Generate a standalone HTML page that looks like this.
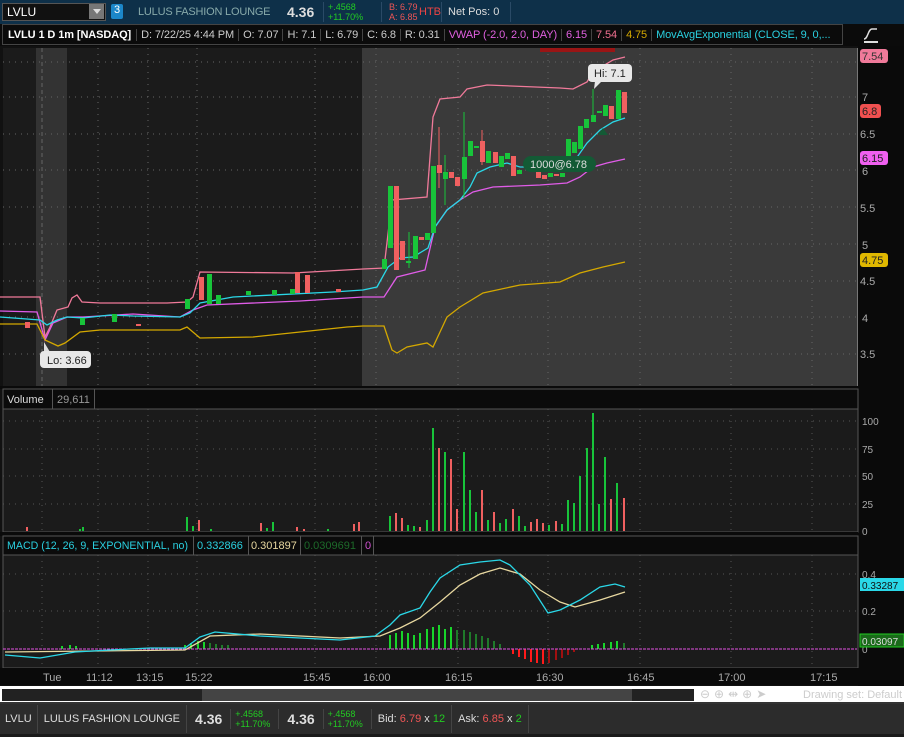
<!DOCTYPE html>
<html><head><meta charset="utf-8"><style>
*{margin:0;padding:0;box-sizing:border-box}
body{width:904px;height:737px;background:#111;font-family:"Liberation Sans",sans-serif;overflow:hidden;position:relative}
.a{position:absolute;white-space:nowrap}
</style></head><body>
<!-- top bar -->
<div class="a" style="left:0;top:0;width:904px;height:24px;background:#0e3049"></div>
<div class="a" style="left:2px;top:3px;width:104px;height:18px;background:#111;border:1px solid #555"></div>
<div class="a" style="left:7px;top:5px;color:#fff;font-size:12px">LVLU</div>
<div class="a" style="left:89px;top:4px;width:15px;height:15px;background:#777"></div>
<div class="a" style="left:93px;top:9px;width:0;height:0;border-left:4px solid transparent;border-right:4px solid transparent;border-top:5px solid #ddd"></div>
<div class="a" style="left:111px;top:4px;width:12px;height:15px;background:#1c87c9;color:#fff;font-size:11px;text-align:center;border-radius:2px">3</div>
<div class="a" style="left:138px;top:6px;color:#8aa;font-size:11px;letter-spacing:-0.2px">LULUS FASHION LOUNGE</div>
<div class="a" style="left:287px;top:4px;color:#ddd;font-size:14px;font-weight:bold">4.36</div>
<div class="a" style="left:328px;top:2px;color:#2c2;font-size:9px;line-height:10px">+.4568<br>+11.70%</div>
<div class="a" style="left:389px;top:2px;color:#e55;font-size:9px;line-height:10px">B: 6.79<br>A: 6.85</div>
<div class="a" style="left:419px;top:6px;color:#e44;font-size:11px">HTB</div>
<div class="a" style="left:448px;top:6px;color:#ddd;font-size:11px">Net Pos: 0</div>
<div class="a" style="left:323px;top:2px;width:1px;height:20px;background:#2a4a66"></div>
<div class="a" style="left:381px;top:2px;width:1px;height:20px;background:#2a4a66"></div>
<div class="a" style="left:441px;top:2px;width:1px;height:20px;background:#2a4a66"></div>
<div class="a" style="left:510px;top:2px;width:1px;height:20px;background:#2a4a66"></div>
<!-- chart header -->
<div class="a" style="left:0;top:24px;width:904px;height:22px;background:#0b0b0b"></div>
<div class="a" style="left:2px;top:24px;width:841px;height:21px;border:1px solid #444;font-size:11px;color:#ccc;display:flex;align-items:center;letter-spacing:-0.1px">
<span style="padding:0 5px;color:#fff;font-weight:bold;border-right:1px solid #444">LVLU 1 D 1m [NASDAQ]</span>
<span style="padding:0 4px;border-right:1px solid #444">D: 7/22/25 4:44 PM</span>
<span style="padding:0 4px;border-right:1px solid #444">O: 7.07</span>
<span style="padding:0 4px;border-right:1px solid #444">H: 7.1</span>
<span style="padding:0 4px;border-right:1px solid #444">L: 6.79</span>
<span style="padding:0 4px;border-right:1px solid #444">C: 6.8</span>
<span style="padding:0 4px;border-right:1px solid #444">R: 0.31</span>
<span style="padding:0 4px;color:#e060e0;border-right:1px solid #444">VWAP (-2.0, 2.0, DAY)</span>
<span style="padding:0 4px;color:#e060e0;border-right:1px solid #444">6.15</span>
<span style="padding:0 4px;color:#f07090;border-right:1px solid #444">7.54</span>
<span style="padding:0 4px;color:#d4a800;border-right:1px solid #444">4.75</span>
<span style="padding:0 4px;color:#2ad0e0">MovAvgExponential (CLOSE, 9, 0,...</span>
</div>
<svg class="a" style="left:862px;top:26px" width="18" height="18"><path d="M2 13 C6 13 6 3 10 3 L15 3" stroke="#ddd" fill="none" stroke-width="1.5"/><line x1="2" y1="16" x2="16" y2="16" stroke="#ddd" stroke-width="2"/></svg>

<svg class="a" style="left:0;top:46px" width="904" height="640" viewBox="0 46 904 640">
<rect x="3" y="48" width="855" height="338" fill="#1b1b1b"/>
<rect x="362" y="48" width="496" height="338" fill="#3a3a3a"/>
<rect x="36" y="48" width="31" height="338" fill="#333"/>
<line x1="42" y1="48" x2="42" y2="386" stroke="#666" stroke-dasharray="4,3"/>
<g stroke="#666" stroke-dasharray="1,5">
<line x1="3" y1="62" x2="857" y2="62"/><line x1="3" y1="97" x2="857" y2="97"/><line x1="3" y1="134" x2="857" y2="134"/><line x1="3" y1="170" x2="857" y2="170"/><line x1="3" y1="207" x2="857" y2="207"/><line x1="3" y1="244" x2="857" y2="244"/><line x1="3" y1="281" x2="857" y2="281"/><line x1="3" y1="317" x2="857" y2="317"/><line x1="3" y1="354" x2="857" y2="354"/>
<line x1="98" y1="48" x2="98" y2="386"/><line x1="148" y1="48" x2="148" y2="386"/><line x1="197" y1="48" x2="197" y2="386"/><line x1="315" y1="48" x2="315" y2="386"/><line x1="376" y1="48" x2="376" y2="386"/><line x1="458" y1="48" x2="458" y2="386"/><line x1="548" y1="48" x2="548" y2="386"/><line x1="640" y1="48" x2="640" y2="386"/><line x1="731" y1="48" x2="731" y2="386"/><line x1="812" y1="48" x2="812" y2="386"/>
</g>
<rect x="540" y="48" width="75" height="4" fill="#9a1515"/>
<line x1="857.5" y1="48" x2="857.5" y2="386" stroke="#777"/>
<g fill="none" stroke-width="1.3">
<polyline stroke="#f07a9a" points="0,297 40,297 45,337 50,327 57,310 68,307 72,298 77,295 82,302 100,303 133,303 167,303 187,302 193,297 200,272 293,273 363,269 384,268 392,200 427,197 433,117 440,99 460,97 467,89 487,85 560,88 573,89 587,82 593,72 613,60 625,57"/>
<polyline stroke="#e05ce8" points="0,311 37,312 45,340 53,323 67,317 83,317 133,314 180,317 193,310 207,305 300,301 363,297 384,297 397,277 425,270 435,227 447,210 460,200 473,192 493,187 540,185 567,183 580,177 593,167 607,163 625,159"/>
<polyline stroke="#d4a800" points="0,324 37,324 45,340 58,346 65,343 80,332 100,330 180,330 187,327 200,338 253,337 300,332 347,327 363,326 384,326 392,350 397,353 407,347 427,343 433,347 447,317 460,307 483,293 520,285 560,282 580,273 603,267 625,262"/>
<polyline stroke="#2ad8e8" points="0,317 40,320 47,325 57,320 67,317 83,318 110,315 133,316 180,317 190,313 200,303 233,297 333,292 363,290 377,287 388,267 400,258 413,257 428,248 435,227 447,210 460,200 470,187 477,173 490,167 507,163 520,167 560,167 573,163 587,143 600,130 613,122 625,118"/>
</g>
<g fill="#18c43a">
<rect x="80" y="318" width="5" height="7"/><rect x="112" y="314" width="5" height="8"/><rect x="185" y="299" width="5" height="10"/><rect x="207" y="274" width="5" height="30"/><rect x="216" y="295" width="5" height="9"/><rect x="246" y="291" width="5" height="4"/><rect x="272" y="290" width="5" height="5"/><rect x="290" y="289" width="5" height="5"/>
<rect x="382" y="259" width="5" height="10"/><rect x="388" y="186" width="5" height="62"/><rect x="406" y="261" width="5" height="2"/><rect x="413" y="236" width="5" height="23"/><rect x="425" y="233" width="5" height="7"/><rect x="431" y="166" width="5" height="67"/><rect x="443" y="172" width="5" height="7"/><rect x="462" y="157" width="5" height="22"/><rect x="468" y="141" width="5" height="15"/><rect x="474" y="146" width="5" height="2"/><rect x="486" y="151" width="5" height="12"/><rect x="499" y="156" width="5" height="11"/><rect x="505" y="153" width="5" height="6"/><rect x="517" y="170" width="5" height="4"/><rect x="548" y="173" width="5" height="4"/><rect x="560" y="173" width="5" height="4"/><rect x="566" y="139" width="5" height="20"/><rect x="572" y="142" width="5" height="11"/><rect x="578" y="126" width="5" height="23"/><rect x="584" y="119" width="5" height="9"/><rect x="591" y="115" width="5" height="7"/><rect x="597" y="111" width="5" height="2"/><rect x="603" y="105" width="5" height="11"/><rect x="616" y="90" width="5" height="29"/>
</g>
<g fill="#f06060">
<rect x="25" y="322" width="5" height="6"/><rect x="136" y="324" width="5" height="2"/><rect x="199" y="277" width="5" height="23"/><rect x="295" y="272" width="5" height="21"/><rect x="305" y="275" width="5" height="18"/><rect x="336" y="289" width="5" height="3"/>
<rect x="394" y="186" width="5" height="84"/><rect x="400" y="241" width="5" height="19"/><rect x="419" y="237" width="5" height="3"/><rect x="437" y="165" width="5" height="8"/><rect x="449" y="172" width="5" height="6"/><rect x="455" y="177" width="5" height="9"/><rect x="480" y="141" width="5" height="21"/><rect x="493" y="152" width="5" height="11"/><rect x="511" y="156" width="5" height="20"/><rect x="536" y="172" width="5" height="6"/><rect x="542" y="175" width="5" height="4"/><rect x="554" y="174" width="5" height="2"/><rect x="609" y="106" width="5" height="13"/><rect x="622" y="92" width="5" height="21"/>
</g>
<g stroke-width="1">
<line x1="439" y1="127" x2="439" y2="188" stroke="#f06060"/><line x1="445" y1="155" x2="445" y2="205" stroke="#18c43a"/><line x1="464" y1="112" x2="464" y2="198" stroke="#18c43a"/><line x1="482" y1="130" x2="482" y2="165" stroke="#f06060"/><line x1="593" y1="89" x2="593" y2="122" stroke="#18c43a"/><line x1="409" y1="232" x2="409" y2="268" stroke="#18c43a"/>
</g>
<polygon points="44,342 50,352 44,352" fill="#ddd"/>
<rect x="40" y="351" width="51" height="17" rx="4" fill="#e8e8e8"/>
<text x="47" y="364" font-size="11" fill="#222">Lo: 3.66</text>
<rect x="588" y="64" width="44" height="18" rx="4" fill="#e8e8e8"/>
<polygon points="595,81 602,81 594,89" fill="#e8e8e8"/>
<text x="594" y="77" font-size="11" fill="#222">Hi: 7.1</text>
<rect x="523" y="156" width="73" height="16" rx="8" fill="#135a35"/>
<polygon points="598,135 603,128 608,135" fill="#135a35"/>
<text x="530" y="168" font-size="11" fill="#ddd">1000@6.78</text>
<rect x="858" y="46" width="46" height="640" fill="#0a0a0a"/>
<g font-size="11" fill="#aaa">
<text x="862" y="101">7</text><text x="860" y="138">6.5</text><text x="862" y="175">6</text><text x="860" y="212">5.5</text><text x="862" y="249">5</text><text x="860" y="285">4.5</text><text x="862" y="322">4</text><text x="860" y="358">3.5</text>
</g>
<rect x="860" y="49" width="28" height="14" rx="3" fill="#f07a9a"/><text x="862" y="60" font-size="11" fill="#333">7.54</text>
<rect x="860" y="104" width="21" height="14" rx="3" fill="#f05050"/><text x="862" y="115" font-size="11" fill="#222">6.8</text>
<rect x="860" y="151" width="28" height="14" rx="3" fill="#f060f0"/><text x="862" y="162" font-size="11" fill="#222">6.15</text>
<rect x="860" y="253" width="28" height="14" rx="3" fill="#e0b800"/><text x="862" y="264" font-size="11" fill="#222">4.75</text>

<rect x="0" y="386" width="858" height="3" fill="#0a0a0a"/>
<rect x="3" y="389" width="855" height="143" fill="#1b1b1b" stroke="#555"/>
<rect x="3" y="389" width="855" height="20" fill="#0b0b0b" stroke="#555"/>
<line x1="52.5" y1="389" x2="52.5" y2="409" stroke="#555"/><line x1="94.5" y1="389" x2="94.5" y2="409" stroke="#555"/>
<text x="7" y="403" font-size="11" fill="#ddd">Volume</text><text x="57" y="403" font-size="11" fill="#999">29,611</text>
<g stroke="#555" stroke-dasharray="1,5">
<line x1="3" y1="421" x2="857" y2="421"/><line x1="3" y1="449" x2="857" y2="449"/><line x1="3" y1="476" x2="857" y2="476"/><line x1="3" y1="504" x2="857" y2="504"/>
<line x1="42" y1="409" x2="42" y2="531"/><line x1="98" y1="409" x2="98" y2="531"/><line x1="148" y1="409" x2="148" y2="531"/><line x1="197" y1="409" x2="197" y2="531"/><line x1="315" y1="409" x2="315" y2="531"/><line x1="376" y1="409" x2="376" y2="531"/><line x1="458" y1="409" x2="458" y2="531"/><line x1="548" y1="409" x2="548" y2="531"/><line x1="640" y1="409" x2="640" y2="531"/><line x1="731" y1="409" x2="731" y2="531"/><line x1="812" y1="409" x2="812" y2="531"/>
</g>
<g stroke-width="2">
<path stroke="#18c43a" d="M80 531v-2M83 531v-4M187 531v-14M193 531v-5M211 531v-2M267 531v-3M273 531v-9M328 531v-2M390 531v-15M408 531v-6M414 531v-5M427 531v-11M433 531v-103M445 531v-79M464 531v-79M470 531v-41M476 531v-19M488 531v-11M500 531v-8M506 531v-12M519 531v-15M525 531v-5M549 531v-6M562 531v-7M568 531v-31M574 531v-28M580 531v-55M587 531v-83M593 531v-118M599 531v-27M605 531v-74M617 531v-48"/>
<path stroke="#f06060" d="M27 531v-4M199 531v-11M261 531v-8M297 531v-4M304 531v-2M354 531v-7M359 531v-9M396 531v-18M402 531v-13M420 531v-4M439 531v-83M451 531v-72M457 531v-22M482 531v-41M494 531v-19M513 531v-22M531 531v-9M537 531v-12M543 531v-8M556 531v-10M611 531v-32M624 531v-33"/>
</g>
<g font-size="10" fill="#aaa"><text x="862" y="425">100</text><text x="862" y="453">75</text><text x="862" y="480">50</text><text x="862" y="508">25</text><text x="862" y="535">0</text></g>

<rect x="0" y="532" width="858" height="4" fill="#0a0a0a"/>
<rect x="3" y="536" width="855" height="132" fill="#1b1b1b" stroke="#555"/>
<rect x="3" y="536" width="855" height="19" fill="#0b0b0b" stroke="#555"/>
<line x1="193.5" y1="536" x2="193.5" y2="555" stroke="#555"/><line x1="248.5" y1="536" x2="248.5" y2="555" stroke="#555"/><line x1="300.5" y1="536" x2="300.5" y2="555" stroke="#555"/><line x1="361.5" y1="536" x2="361.5" y2="555" stroke="#555"/><line x1="373.5" y1="536" x2="373.5" y2="555" stroke="#555"/>
<text x="7" y="549" font-size="11" fill="#2ad0e0" textLength="181" lengthAdjust="spacingAndGlyphs">MACD (12, 26, 9, EXPONENTIAL, no)</text>
<text x="197" y="549" font-size="11" fill="#2ad0e0">0.332866</text>
<text x="251" y="549" font-size="11" fill="#e8d8a0">0.301897</text>
<text x="304" y="549" font-size="11" fill="#1d6a2a">0.0309691</text>
<text x="365" y="549" font-size="11" fill="#d050d0">0</text>
<g stroke="#555" stroke-dasharray="1,5">
<line x1="3" y1="574" x2="857" y2="574"/><line x1="3" y1="611" x2="857" y2="611"/>
<line x1="42" y1="555" x2="42" y2="667"/><line x1="98" y1="555" x2="98" y2="667"/><line x1="148" y1="555" x2="148" y2="667"/><line x1="197" y1="555" x2="197" y2="667"/><line x1="315" y1="555" x2="315" y2="667"/><line x1="376" y1="555" x2="376" y2="667"/><line x1="458" y1="555" x2="458" y2="667"/><line x1="548" y1="555" x2="548" y2="667"/><line x1="640" y1="555" x2="640" y2="667"/><line x1="731" y1="555" x2="731" y2="667"/><line x1="812" y1="555" x2="812" y2="667"/>
</g>
<g stroke-width="2">
<path stroke="#18d42a" d="M62 649v-3M70 649v-4M76 649v-3M185 649v-4M191 649v-6M198 649v-8M204 649v-7M390 649v-14M396 649v-16M402 649v-18M408 649v-16M414 649v-14M420 649v-16M427 649v-20M433 649v-22M439 649v-24M445 649v-20M451 649v-22M592 649v-4M598 649v-5M604 649v-6M611 649v-7M617 649v-8"/>
<path stroke="#1f7a2a" d="M210 649v-6M216 649v-5M222 649v-4M228 649v-4M457 649v-19M464 649v-19M470 649v-17M476 649v-15M482 649v-13M488 649v-11M494 649v-8M500 649v-5M624 649v-6"/>
<path stroke="#ff1a1a" d="M513 649v5M519 649v8M525 649v10M531 649v13M537 649v14M543 649v15"/>
<path stroke="#a01010" d="M549 649v14M556 649v11M562 649v9M568 649v6M574 649v3"/>
</g>
<line x1="3" y1="649" x2="857" y2="649" stroke="#e050e0" stroke-width="1" stroke-dasharray="3,1"/>
<g fill="none" stroke-width="1.3">
<polyline stroke="#e8d8a0" points="5,652 185,650 210,636 260,634 340,638 380,636 400,628 420,618 440,602 460,585 480,574 500,568 520,574 540,590 560,602 575,607 600,600 625,592"/>
<polyline stroke="#2ad8e8" points="5,655 40,658 75,652 110,650 150,648 185,648 200,637 215,632 260,636 300,638 340,640 375,636 390,625 400,615 420,608 430,592 440,578 460,565 480,562 500,560 510,565 530,585 548,613 560,610 580,600 600,587 615,584 625,587"/>
</g>
<g font-size="10" fill="#aaa"><text x="862" y="578">0.4</text><text x="862" y="615">0.2</text><text x="862" y="653">0</text></g>
<rect x="860" y="578" width="44" height="13" fill="#2ad8e8"/><text x="862" y="589" font-size="10" fill="#111">0.33287</text>
<rect x="860" y="634" width="44" height="13" fill="#1a6a1a" stroke="#2c2"/><text x="862" y="645" font-size="10" fill="#ddd">0.03097</text>
<rect x="0" y="668" width="904" height="17" fill="#0a0a0a"/>
<g font-size="11" fill="#aaa">
<text x="43" y="681">Tue</text><text x="86" y="681">11:12</text><text x="136" y="681">13:15</text><text x="185" y="681">15:22</text><text x="303" y="681">15:45</text><text x="363" y="681">16:00</text><text x="445" y="681">16:15</text><text x="536" y="681">16:30</text><text x="627" y="681">16:45</text><text x="718" y="681">17:00</text><text x="810" y="681">17:15</text>
</g>
</svg>
<div class="a" style="left:0;top:686px;width:904px;height:16px;background:#fff"></div>
<div class="a" style="left:2px;top:689px;width:692px;height:12px;background:#222"></div>
<div class="a" style="left:202px;top:689px;width:430px;height:12px;background:#444"></div>
<div class="a" style="left:700px;top:687px;color:#ccc;font-size:12px;letter-spacing:4px">⊖⊕⇹⊕➤</div>
<div class="a" style="left:803px;top:689px;color:#ccc;font-size:11px">Drawing set: Default</div>
<div class="a" style="left:0;top:702px;width:904px;height:2px;background:#333"></div>
<div class="a" style="left:0;top:704px;width:904px;height:30px;background:#2c2c2c;font-size:11px;color:#ddd;display:flex;align-items:center">
<span style="padding:0 5px;border-right:1px solid #444;line-height:28px">LVLU</span>
<span style="padding:0 6px;border-right:1px solid #444;line-height:28px">LULUS FASHION LOUNGE</span>
<span style="padding:0 8px;font-size:14px;font-weight:bold;line-height:28px">4.36</span>
<span style="padding:0 8px 0 4px;border-left:1px solid #444;border-right:1px solid #444;color:#2c2;font-size:9px;line-height:10px">+.4568<br>+11.70%</span>
<span style="padding:0 8px;font-size:14px;font-weight:bold;line-height:28px">4.36</span>
<span style="padding:0 8px 0 4px;border-left:1px solid #444;border-right:1px solid #444;color:#2c2;font-size:9px;line-height:10px">+.4568<br>+11.70%</span>
<span style="padding:0 6px;border-right:1px solid #444;line-height:28px">Bid: <b style="color:#e55;font-weight:normal">6.79</b> x <b style="color:#2c2;font-weight:normal">12</b></span>
<span style="padding:0 6px;border-right:1px solid #444;line-height:28px">Ask: <b style="color:#e55;font-weight:normal">6.85</b> x <b style="color:#2c2;font-weight:normal">2</b></span>
</div>
<div class="a" style="left:0;top:734px;width:904px;height:3px;background:#1a1a1a"></div>
</body></html>
